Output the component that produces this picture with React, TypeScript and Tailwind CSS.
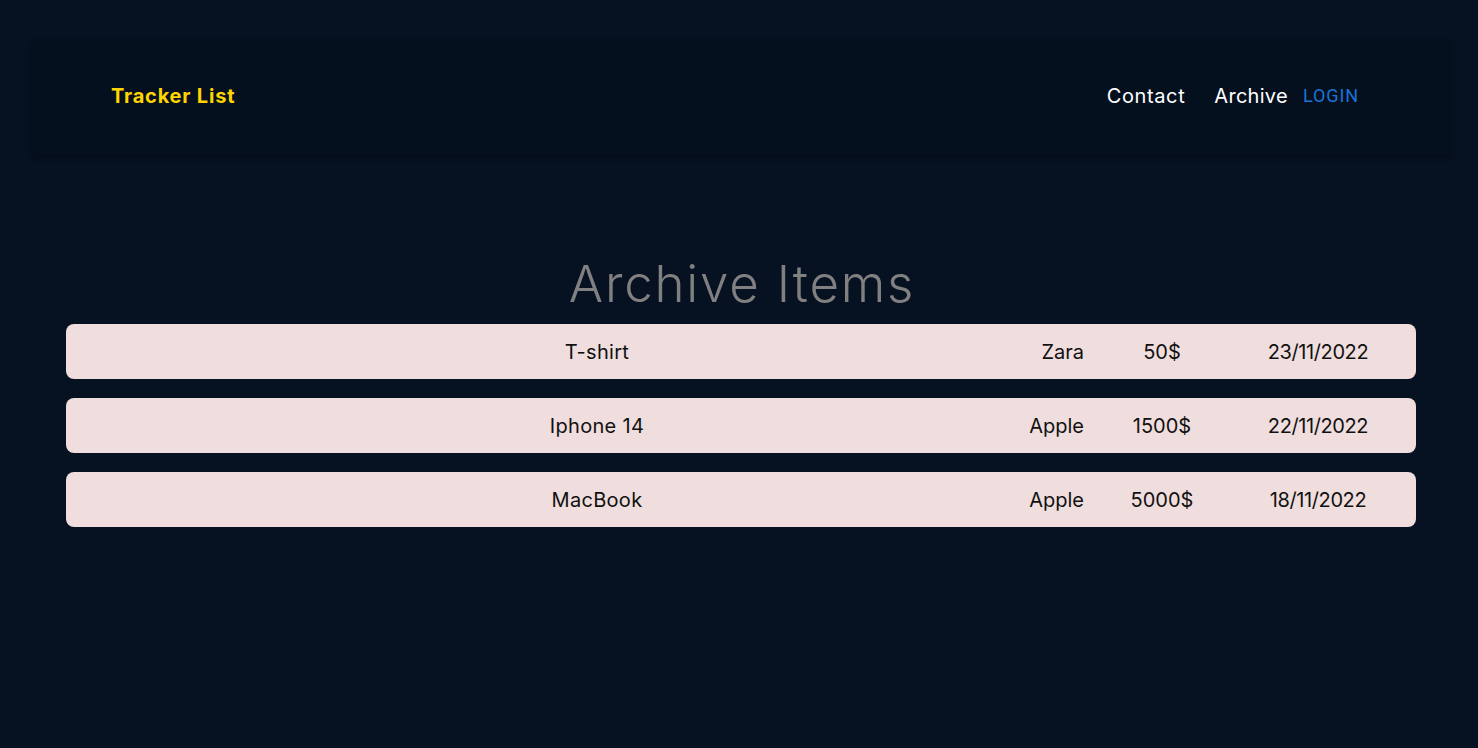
import React from "react";

const items = [
  { name: "T-shirt", brand: "Zara", price: "50$", date: "23/11/2022" },
  { name: "Iphone 14", brand: "Apple", price: "1500$", date: "22/11/2022" },
  { name: "MacBook", brand: "Apple", price: "5000$", date: "18/11/2022" },
];

export default function App() {
  return (
    <div className="min-h-[748px] w-full bg-[#061121] pt-[40px] font-['Inter','Open_Sans',sans-serif]">
      <nav className="ml-[33px] w-[1417px] h-[115px] bg-[#05101f] shadow-[0_2px_6px_rgba(0,0,0,0.3)] flex items-center pl-[78px] pr-[91px] pb-[4px]">
        <span className="text-[#ffd400] text-[20px] font-bold leading-none tracking-[0.8px]">Tracker List</span>
        <div className="ml-auto flex items-center">
          <a className="text-white text-[20px] leading-none tracking-[0.6px]">Contact</a>
          <a className="text-white text-[20px] leading-none ml-[29px] tracking-[0.3px]">Archive</a>
          <button className="text-[#1a73d9] text-[18px] leading-none ml-[15px] font-['Roboto',sans-serif] font-normal uppercase tracking-[0.9px]">Login</button>
        </div>
      </nav>
      <h1 className="mt-[95px] text-center text-[51px] leading-[68px] text-[#808080] font-light tracking-[1.8px] pl-[6px]">Archive Items</h1>
      <div className="ml-[66px] w-[1350px] mt-[6px] flex flex-col gap-[19px]">
        {items.map((it) => (
          <div key={it.name} className="h-[55px] rounded-[8px] bg-[#f0dddd] grid grid-cols-[806px_84px_156px_156px] items-center pl-[128px] pr-[20px] text-[20px] text-[#111]">
            <div className="text-center tracking-[0.3px]">{it.name}</div>
            <div className="text-right">{it.brand}</div>
            <div className="text-center">{it.price}</div>
            <div className="text-center tracking-[-0.4px]">{it.date}</div>
          </div>
        ))}
      </div>
    </div>
  );
}
